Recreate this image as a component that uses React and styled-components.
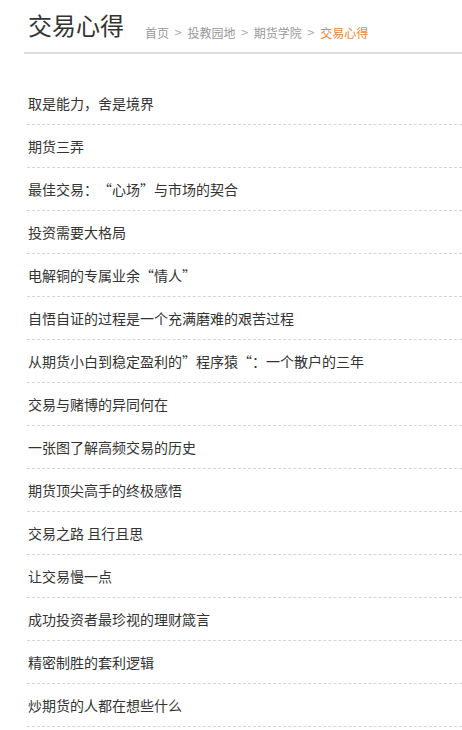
import React from "react";
import styled, { createGlobalStyle } from "styled-components";

const GlobalStyle = createGlobalStyle`
  html, body {
    margin: 0;
    padding: 0;
    background: #fff;
  }
  body {
    font-family: "Noto Sans CJK SC", "Noto Sans", sans-serif;
    color: #333;
    text-spacing-trim: space-all;
  }
`;

const Page = styled.div`
  width: 462px;
  padding-left: 24px;
  box-sizing: border-box;
  overflow: hidden;
`;

const Header = styled.header`
  display: flex;
  align-items: flex-end;
  height: 54px;
  border-bottom: 2px solid #dedede;
  padding-left: 4px;
  box-sizing: border-box;
`;

const Title = styled.h1`
  margin: 0 0 11px 0;
  font-size: 24px;
  font-weight: 400;
  line-height: 32px;
  color: #333;
`;

const Crumbs = styled.nav`
  display: flex;
  align-items: center;
  margin: 0 0 10px 21px;
  font-size: 12px;
  line-height: 18px;
  color: #999;
`;

const Crumb = styled.span`
  color: ${(p) => (p.$current ? "#e0883a" : "#999")};
`;

const Sep = styled.span`
  margin: 0 5px;
  color: #aaa;
  font-family: "DejaVu Sans", sans-serif;
  font-size: 10px;
`;

const List = styled.ul`
  list-style: none;
  margin: 28px 0 0 3px;
  padding: 0;
`;

const Item = styled.li`
  height: 42px;
  display: flex;
  align-items: center;
  padding-left: 1px;
  border-bottom: 1px dashed #d6d6d6;
  font-size: 14px;
  color: #333;
  white-space: nowrap;
`;

const crumbs = ["首页", "投教园地", "期货学院"];

const articles = [
  "取是能力，舍是境界",
  "期货三弄",
  "最佳交易：“心场”与市场的契合",
  "投资需要大格局",
  "电解铜的专属业余“情人”",
  "自悟自证的过程是一个充满磨难的艰苦过程",
  "从期货小白到稳定盈利的”程序猿“：一个散户的三年",
  "交易与赌博的异同何在",
  "一张图了解高频交易的历史",
  "期货顶尖高手的终极感悟",
  "交易之路 且行且思",
  "让交易慢一点",
  "成功投资者最珍视的理财箴言",
  "精密制胜的套利逻辑",
  "炒期货的人都在想些什么",
];

export default function App() {
  return (
    <Page lang="zh-CN">
      <GlobalStyle />
      <Header>
        <Title>交易心得</Title>
        <Crumbs>
          {crumbs.map((c) => (
            <React.Fragment key={c}>
              <Crumb>{c}</Crumb>
              <Sep>&gt;</Sep>
            </React.Fragment>
          ))}
          <Crumb $current>交易心得</Crumb>
        </Crumbs>
      </Header>
      <List>
        {articles.map((a) => (
          <Item key={a}>{a}</Item>
        ))}
      </List>
    </Page>
  );
}
